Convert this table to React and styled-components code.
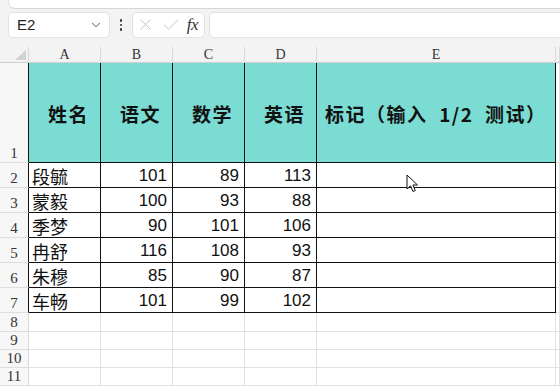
import React from "react";
import styled, { createGlobalStyle } from "styled-components";
import { ChevronDown, X, Check } from "lucide-react";

const GlobalStyle = createGlobalStyle`
  html, body { margin: 0; padding: 0; background: #f3f3f3; }
  * { box-sizing: border-box; }
`;

const CJK = `"Noto Sans CJK SC", "Noto Sans", sans-serif`;
const TEAL = "#7bdcd3";

const Page = styled.div`
  position: relative;
  width: 560px;
  height: 386px;
  overflow: hidden;
  background: #f3f3f3;
  display: flex;
  flex-direction: column;
`;

const TopStrip = styled.div`
  height: 10px;
  padding-left: 8px;
  display: flex;
`;

const RibbonEdge = styled.div`
  flex: 1;
  height: 9px;
  background: #fff;
  border-bottom: 1px solid #d6d6d6;
  border-left: 1px solid #e2e2e2;
  border-bottom-left-radius: 7px;
`;

const FormulaBar = styled.div`
  height: 38px;
  display: flex;
  align-items: flex-start;
  padding: 2px 0 0 8px;
`;

const Box = styled.div`
  height: 26px;
  background: #fff;
  border: 1px solid #e2e2e2;
  border-radius: 5px;
  display: flex;
  align-items: center;
`;

const NameBox = styled(Box)`
  width: 102px;
  padding: 0 6px 0 8px;
  justify-content: space-between;
  font-family: "Liberation Sans", Arial, sans-serif;
  font-size: 15px;
  color: #222;
`;

const Dots = styled.div`
  width: 22px;
  display: flex;
  flex-direction: column;
  align-items: center;
  justify-content: center;
  gap: 2px;
  height: 26px;
  & > span {
    width: 2.5px;
    height: 2.5px;
    border-radius: 50%;
    background: #333;
  }
`;

const FxBox = styled(Box)`
  width: 73px;
  padding: 0 6px 0 3px;
  justify-content: space-between;
  color: #bcbcbc;
`;

const Fx = styled.span`
  font-family: "Liberation Serif", "Times New Roman", serif;
  font-style: italic;
  font-size: 17px;
  color: #333;
  letter-spacing: -0.5px;
`;

const FormulaInput = styled(Box)`
  flex: 1;
  margin-left: 4px;
  border-top-right-radius: 0;
  border-bottom-right-radius: 0;
  border-right: none;
`;

const Sheet = styled.div`
  flex: 1;
  display: grid;
  grid-template-columns: 29px 72px 72px 72px 72px 239px 1fr;
  grid-template-rows: 16px 100px repeat(6, 25px) 19px 18px 18px 18px;
  background: #fff;
`;

const Corner = styled.div`
  background: #f3f3f3;
  border-right: 1px solid #d8d8d8;
  border-bottom: 1px solid #cfcfcf;
  display: flex;
  align-items: flex-end;
  justify-content: flex-end;
  padding: 0 2px 2px 0;
`;

const ColHead = styled.div`
  background: #f3f3f3;
  border-right: 1px solid #d8d8d8;
  border-bottom: 1px solid #cfcfcf;
  font-family: "Liberation Serif", "Times New Roman", serif;
  font-size: 14px;
  color: #333;
  display: flex;
  align-items: center;
  justify-content: center;
  line-height: 1;
  padding-top: 1px;
`;

const RowHead = styled.div`
  background: #f7f7f7;
  border-right: 1px solid ${(p) => (p.$dark ? "#111" : "#d8d8d8")};
  border-bottom: 1px solid #dedede;
  font-family: "Liberation Serif", "Times New Roman", serif;
  font-size: 15px;
  color: #333;
  display: flex;
  align-items: flex-end;
  justify-content: center;
  padding-bottom: ${(p) => (p.$tall ? "1px" : "1px")};
  line-height: 1;
`;

const Cell = styled.div`
  background: ${(p) => (p.$head ? TEAL : "#fff")};
  border-right: 1px solid ${(p) => (p.$table ? "#111" : "#e1e1e1")};
  border-bottom: 1px solid ${(p) => (p.$table ? "#111" : "#e1e1e1")};
  display: flex;
  align-items: center;
  justify-content: ${(p) =>
    p.$align === "right" ? "flex-end" : p.$align === "center" ? "center" : "flex-start"};
  padding: ${(p) => (p.$align === "right" ? "0 5px 0 0" : p.$head ? "0 0 0 8px" : "0 0 0 3px")};
  font-family: ${(p) => (p.$num ? `"Liberation Sans", Arial, sans-serif` : CJK)};
  font-size: ${(p) => (p.$head ? "19px" : p.$num ? "17px" : "18px")};
  font-weight: ${(p) => (p.$head ? 700 : 400)};
  letter-spacing: ${(p) => (p.$head ? "1.5px" : "0")};
  color: #111;
  white-space: pre;
  overflow: hidden;
  line-height: 1;
  padding-top: ${(p) => (p.$head ? "2px" : "1px")};
`;

const Cursor = styled.svg`
  position: absolute;
  left: 406px;
  top: 174px;
  pointer-events: none;
`;

const cols = ["A", "B", "C", "D", "E"];
const headers = ["姓名", "语文", "数学", "英语", "标记（输入  1/2  测试）"];
const rows = [
  ["段毓", 101, 89, 113],
  ["蒙毅", 100, 93, 88],
  ["季梦", 90, 101, 106],
  ["冉舒", 116, 108, 93],
  ["朱穆", 85, 90, 87],
  ["车畅", 101, 99, 102],
];

export default function App() {
  return (
    <Page>
      <GlobalStyle />
      <TopStrip>
        <RibbonEdge />
      </TopStrip>
      <FormulaBar>
        <NameBox>
          <span>E2</span>
          <ChevronDown size={14} strokeWidth={1.6} color="#444" />
        </NameBox>
        <Dots>
          <span />
          <span />
          <span />
        </Dots>
        <FxBox>
          <X size={19} strokeWidth={1.1} />
          <Check size={20} strokeWidth={1.1} />
          <Fx>fx</Fx>
        </FxBox>
        <FormulaInput />
      </FormulaBar>
      <Sheet>
        <Corner>
          <svg width="11" height="10" viewBox="0 0 11 10">
            <polygon points="11,0 11,10 0,10" fill="#d2d2d2" />
          </svg>
        </Corner>
        {cols.map((c) => (
          <ColHead key={c}>{c}</ColHead>
        ))}
        <ColHead />

        <RowHead $dark $tall>1</RowHead>
        {headers.map((h, i) => (
          <Cell key={h} $head $table $align={i === 4 ? "left" : "center"}>
            {h}
          </Cell>
        ))}
        <Cell />

        {rows.map((r, ri) => (
          <React.Fragment key={ri}>
            <RowHead $dark>{ri + 2}</RowHead>
            <Cell $table>{r[0]}</Cell>
            {r.slice(1).map((v, vi) => (
              <Cell key={vi} $table $num $align="right">
                {v}
              </Cell>
            ))}
            <Cell $table />
            <Cell />
          </React.Fragment>
        ))}

        {[8, 9, 10, 11].map((n) => (
          <React.Fragment key={n}>
            <RowHead>{n}</RowHead>
            {[0, 1, 2, 3, 4, 5].map((k) => (
              <Cell key={k} />
            ))}
          </React.Fragment>
        ))}
      </Sheet>
      <Cursor width="13" height="20" viewBox="0 0 13 20">
        <path
          d="M1 1 L1 15 L4.5 11.8 L7 17.5 L9.3 16.5 L6.9 11 L11.5 11 Z"
          fill="#fff"
          stroke="#111"
          strokeWidth="1"
          strokeLinejoin="round"
        />
      </Cursor>
    </Page>
  );
}
